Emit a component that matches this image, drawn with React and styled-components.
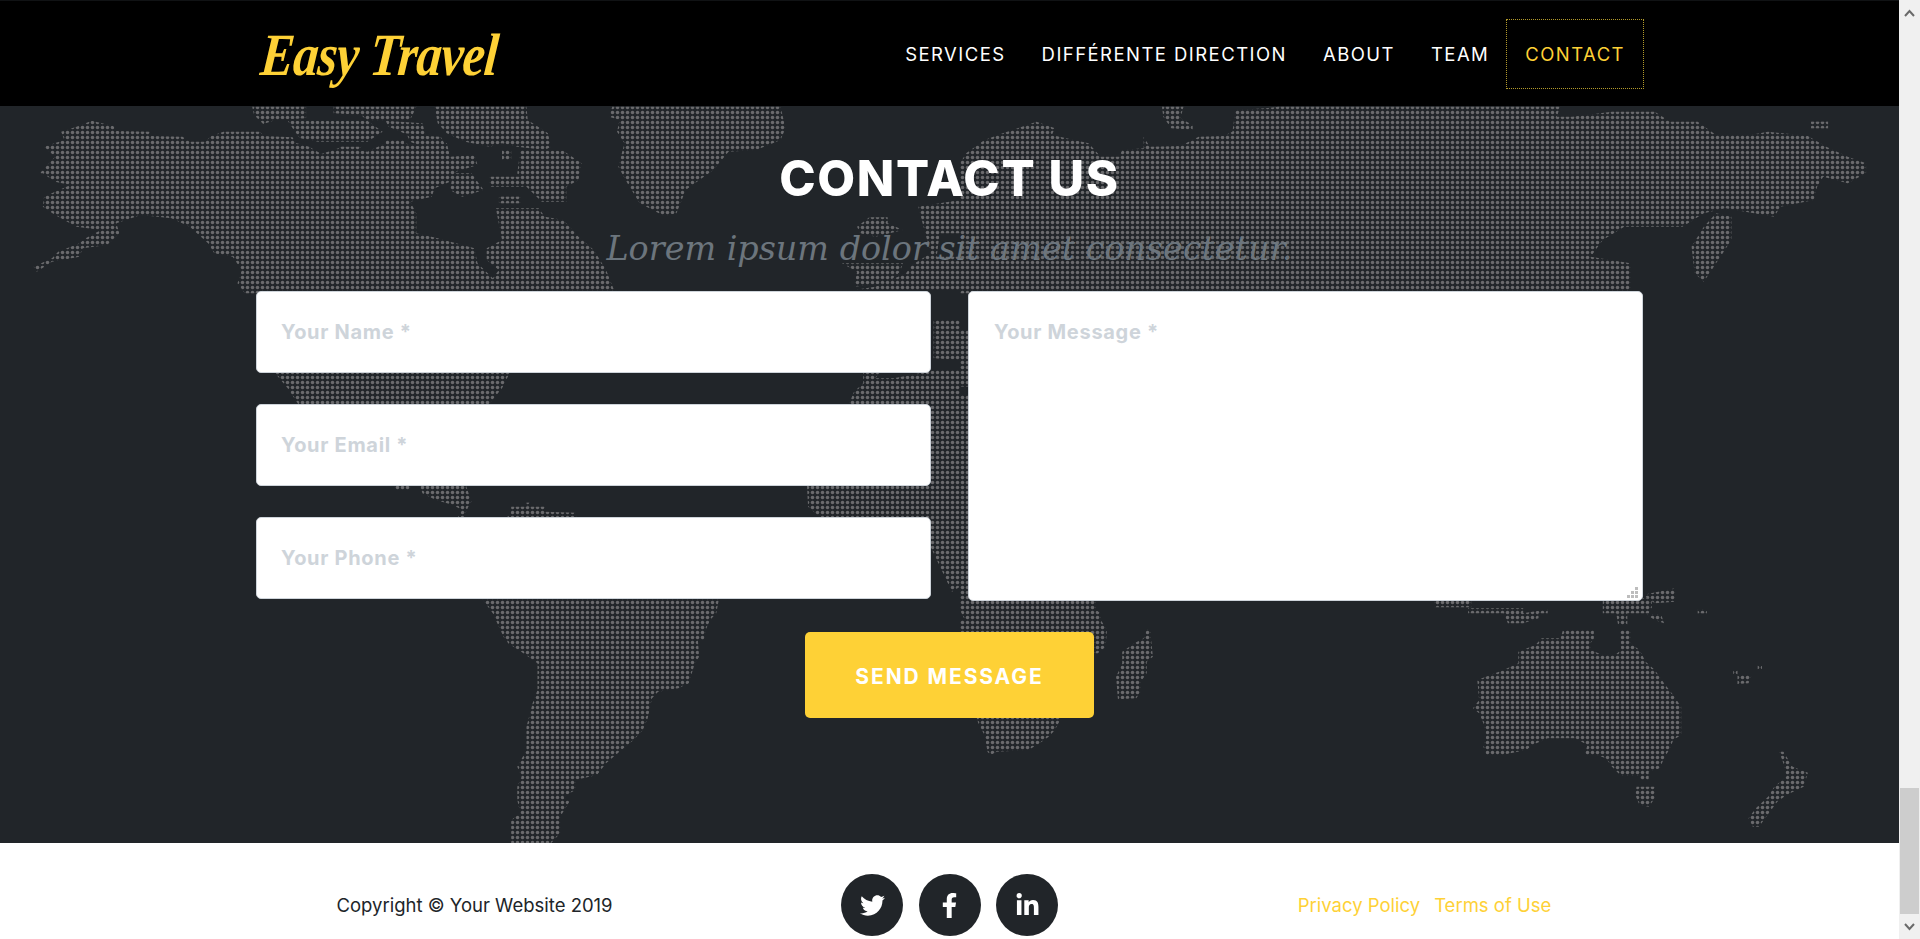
import React from 'react';
import styled, { createGlobalStyle } from 'styled-components';
import { FaTwitter, FaFacebookF, FaLinkedinIn } from 'react-icons/fa';

const GlobalStyle = createGlobalStyle`
  html, body {
    margin: 0;
    padding: 0;
    height: 100%;
    overflow: hidden;
    background: #fff;
  }
  * { box-sizing: border-box; }
`;

const navItems = ['Services', 'Différente Direction', 'About', 'Team', 'Contact'];

// continents traced per view: ox/oy is the corner of the traced tile, points are stretched
const mapTiles = [
  { ox: 0, oy: 0, shapes: [
    '65,520 75,500 90,470 72,440 105,420 100,395 125,380 150,362 185,378 190,393 245,395 245,408 298,410 310,425 335,425 345,408 365,395 425,395 430,408 478,412 482,428 505,440 525,462 560,440 600,455 630,430 660,430 690,440 700,425 730,430 735,470 775,465 780,495 745,515 735,545 710,565 705,590 670,605 680,640 680,700 715,715 775,745 780,790 805,835 815,810 795,780 795,745 820,720 810,625 880,625 890,650 920,660 945,710 970,750 990,810 1005,880 400,880 388,850 395,810 380,770 350,760 340,730 310,680 280,655 230,645 190,670 195,700 175,735 135,745 130,770 85,785 60,815 55,800 85,775 95,755 130,730 140,715 165,690 125,680 110,665 90,645 70,620 72,590 90,575 115,555 90,545 70,520',
    '412,320 500,320 500,355 450,360 430,372 415,345',
    '545,320 680,320 670,360 600,362 590,345 545,340',
    '470,362 600,362 625,395 600,425 520,425 490,415 480,390',
    '710,320 860,320 862,360 895,400 900,440 890,450 845,440 820,430 800,440 760,425 730,400 715,370',
    '630,362 690,370 695,405 660,400 635,380',
    '665,405 720,410 730,445 695,445 670,425',
    '630,420 660,420 660,435 630,435',
    '555,440 590,440 585,460 555,460',
    '820,450 835,450 835,480 820,480',
    '850,450 920,452 950,490 945,540 925,560 925,605 885,605 860,560 845,520',
    '800,530 860,530 855,560 800,560',
    '815,590 850,590 850,610 815,610',
    '740,520 770,520 790,570 755,590 735,570',
    '1000,320 1275,320 1283,385 1275,420 1235,450 1190,455 1165,510 1120,570 1105,640 1085,648 1045,610 1025,550 1010,500 1020,430 1008,395 1012,360 995,350',
    '1420,652 1450,652 1450,670 1475,690 1430,710 1405,700 1400,680',
    '1500,620 1568,600 1568,700 1535,700 1530,770 1568,770 1568,870 1395,870 1430,860 1480,820 1490,795 1520,760 1510,690',
    '1375,790 1475,790 1470,815 1450,850 1395,860 1400,815',
  ] },
  { ox: 960, oy: 0, shapes: [
    '0,490 10,460 40,420 70,400 125,365 155,385 150,405 210,430 230,470 260,470 265,450 300,445 300,410 310,440 360,438 390,410 430,408 445,395 450,330 500,325 520,320 980,320 975,350 1000,350 1065,335 1135,335 1160,365 1205,365 1235,405 1290,405 1320,395 1385,408 1415,440 1450,470 1480,490 1480,520 1450,550 1410,530 1400,560 1395,600 1340,620 1330,650 1250,625 1215,640 1180,680 1085,680 1050,720 1030,770 1095,790 1095,880 0,880',
    '330,320 365,320 360,355 380,375 380,390 345,385 332,350',
    '1235,640 1260,650 1260,720 1235,790 1215,845 1200,820 1195,740 1215,680',
    '1390,365 1418,365 1418,385 1390,385',
  ] },
  { ox: 0, oy: 320, shapes: [
    '445,150 835,150 820,205 795,260 490,260 470,205',
    '1410,150 1440,150 1430,175 1460,175 1530,150 1568,150 1568,260 1385,260 1395,215 1410,190',
    '1525,0 1568,0 1568,120 1525,115',
    '1520,250 1568,250 1568,800 1555,815 1520,680',
    '645,490 670,490 670,510 645,510',
    '685,490 760,490 770,545 765,560 755,600 745,600 755,570 740,555 712,540 690,520',
    '860,548 866,548 866,560 860,560',
    '835,560 890,560 890,575 940,578 942,600 825,600 835,575',
    '1318,490 1568,490 1568,600 1345,600 1320,560',
    '785,830 1175,830 1170,880 1155,910 1150,960 825,960 815,920 805,880',
  ] },
  { ox: 960, oy: 320, shapes: [
    '0,30 14,30 14,200 0,200',
    '0,225 14,225 14,850 0,850',
    '0,835 222,835 222,870 230,880 230,930 238,930 238,960 12,960 8,900 0,870',
    '305,928 312,928 312,960 305,960',
    '775,835 835,835 835,862 775,862',
    '830,865 920,865 920,880 960,868 960,880 945,880 945,895 920,910 895,910 888,880 830,880',
    '1050,835 1130,835 1130,862 1125,880 1050,880',
    '1115,825 1168,805 1168,845 1135,850',
    '1072,880 1090,880 1090,915 1075,915',
    '1120,882 1145,882 1150,910 1135,900',
    '1205,868 1220,868 1220,880 1205,880',
    '985,930 1035,930 1035,960 980,960',
    '1080,930 1095,930 1095,960 1080,960',
  ] },
  { ox: 0, oy: 620, shapes: [
    '810,0 1160,0 1150,40 1140,60 1142,110 1135,130 1125,190 1108,205 1075,215 1065,235 1058,295 1050,330 1035,360 1015,390 990,430 975,465 940,480 940,510 920,530 930,545 915,590 915,640 900,670 835,670 835,600 850,580 845,540 845,500 852,470 845,440 860,390 860,320 870,250 878,210 878,130 855,100 830,70 820,30',
    '993,395 1008,395 1008,405 993,405',
  ] },
  { ox: 960, oy: 620, shapes: [
    '0,0 230,0 240,30 238,80 225,100 165,100 165,295 155,330 145,350 130,370 112,390 60,395 50,405 45,395 40,345 30,310 25,280 0,280',
    '305,30 312,30 312,55 315,110 305,125 305,160 295,185 295,215 288,235 258,238 255,170 265,130 265,95 285,70 300,55',
    '985,30 1035,30 1035,55 1030,70 1030,90 1050,105 1070,105 1080,90 1078,30 1095,30 1095,70 1110,90 1120,125 1135,150 1150,190 1165,225 1178,260 1178,345 1165,360 1160,385 1150,415 1143,445 1125,455 1125,480 1112,480 1110,468 1080,468 1065,440 1055,415 1040,405 1020,405 1025,375 1005,355 960,355 935,375 925,390 885,405 860,405 855,380 860,345 855,310 848,280 838,265 848,240 845,180 888,150 912,130 912,95 940,75 950,55 985,55',
    '1105,500 1135,500 1135,535 1125,560 1110,555 1103,525',
    '1338,395 1345,395 1360,440 1385,458 1378,500 1350,525 1335,545 1325,570 1305,620 1295,620 1288,595 1300,565 1320,530 1330,500 1350,470 1345,430',
    '1263,150 1270,150 1270,165 1263,165',
    '1303,135 1310,135 1310,148 1303,148',
    '1270,165 1293,165 1288,190 1270,192',
  ] },
];

const WorldMap = () => (
  <MapSvg viewBox="0 106 1899 737" preserveAspectRatio="none" aria-hidden="true">
    <defs>
      <pattern id="dots" x="0" y="0" width="5" height="5" patternUnits="userSpaceOnUse">
        <circle cx="2.5" cy="2.5" r="1.75" fill="#6a6b6d" />
      </pattern>
      <filter id="soften" x="0" y="0" width="1" height="1">
        <feGaussianBlur stdDeviation="0.55" />
      </filter>
      <clipPath id="land">
        {mapTiles.map((tile) =>
          tile.shapes.map((pts, i) => (
            <polygon
              key={`${tile.ox}-${tile.oy}-${i}`}
              points={pts}
              transform={`translate(${tile.ox} ${tile.oy}) scale(0.6122 0.3333)`}
            />
          ))
        )}
      </clipPath>
    </defs>
    <g filter="url(#soften)">
      <rect x="0" y="106" width="1899" height="737" fill="url(#dots)" clipPath="url(#land)" />
    </g>
  </MapSvg>
);

const App = () => (
  <Viewport>
    <GlobalStyle />
    <Page>
      <Navbar>
        <NavInner>
          <Logo>Easy Travel</Logo>
          <NavList>
            {navItems.map((item) => (
              <NavLink key={item} href="#" $active={item === 'Contact'}>{item}</NavLink>
            ))}
          </NavList>
        </NavInner>
      </Navbar>

      <ContactSection>
        <WorldMap />
        <ContactInner>
          <Heading>CONTACT US</Heading>
          <SubHeading>Lorem ipsum dolor sit amet consectetur.</SubHeading>
          <FormGrid>
            <FieldColumn>
              <TextField type="text" placeholder="Your Name *" />
              <TextField type="email" placeholder="Your Email *" />
              <TextField type="tel" placeholder="Your Phone *" />
            </FieldColumn>
            <MessageWrap>
              <MessageField placeholder="Your Message *" />
              <ResizeGrip viewBox="0 0 12 12" aria-hidden="true">
                <rect x="8" y="0" width="3" height="3" />
                <rect x="4" y="4" width="3" height="3" />
                <rect x="8" y="4" width="3" height="3" />
                <rect x="0" y="8" width="3" height="3" />
                <rect x="4" y="8" width="3" height="3" />
                <rect x="8" y="8" width="3" height="3" />
              </ResizeGrip>
            </MessageWrap>
          </FormGrid>
          <SendButton type="button">SEND MESSAGE</SendButton>
        </ContactInner>
      </ContactSection>

      <Footer>
        <FooterInner>
          <Copyright>Copyright © Your Website 2019</Copyright>
          <SocialList>
            <SocialLink href="#"><FaTwitter /></SocialLink>
            <SocialLink href="#"><FaFacebookF /></SocialLink>
            <SocialLink href="#"><FaLinkedinIn /></SocialLink>
          </SocialList>
          <FooterLinks>
            <FooterLink href="#">Privacy Policy</FooterLink>
            <FooterLink href="#">Terms of Use</FooterLink>
          </FooterLinks>
        </FooterInner>
      </Footer>
    </Page>

    <Scrollbar>
      <ScrollArrow>
        <svg width="11" height="8" viewBox="0 0 11 8"><path d="M1 7 L5.5 2 L10 7" fill="none" stroke="#6a6a6a" strokeWidth="2" /></svg>
      </ScrollArrow>
      <ScrollSpacer />
      <ScrollThumb />
      <ScrollArrow>
        <svg width="11" height="8" viewBox="0 0 11 8"><path d="M1 1 L5.5 6 L10 1" fill="none" stroke="#6a6a6a" strokeWidth="2" /></svg>
      </ScrollArrow>
    </Scrollbar>
  </Viewport>
);

export default App;

const Viewport = styled.div`
  display: flex;
  width: 100%;
  height: 939px;
  overflow: hidden;
`;

const Page = styled.div`
  flex: 1;
  min-width: 0;
  display: flex;
  flex-direction: column;
  font-family: Inter, "Noto Sans", sans-serif;
`;

const Navbar = styled.header`
  height: 106px;
  flex-shrink: 0;
  background: #000;
  border-top: 1px solid #101214;
`;

const NavInner = styled.div`
  width: 1425px;
  height: 100%;
  margin: 0 auto;
  padding: 0 19px 0 24px;
  display: flex;
  align-items: center;
  justify-content: space-between;
`;

const Logo = styled.a`
  margin-top: 3px;
  font-family: "Liberation Serif", serif;
  font-style: italic;
  font-weight: 700;
  font-size: 60px;
  letter-spacing: -1px;
  color: #fed136;
  white-space: nowrap;
  transform: scaleX(0.84) skewX(-6deg);
  transform-origin: left center;
`;

const NavList = styled.nav`
  display: flex;
  align-items: center;
`;

const NavLink = styled.a`
  display: flex;
  align-items: center;
  height: 68px;
  padding: 0 18px;
  font-size: 18.5px;
  letter-spacing: 1.45px;
  text-transform: uppercase;
  text-decoration: none;
  white-space: nowrap;
  color: ${(p) => (p.$active ? '#fed136' : '#fff')};
  outline: ${(p) => (p.$active ? '1px dotted #b39a2a' : 'none')};
`;

const ContactSection = styled.section`
  position: relative;
  height: 737px;
  flex-shrink: 0;
  background: #212529;
  overflow: hidden;
`;

const MapSvg = styled.svg`
  position: absolute;
  inset: 0;
  width: 100%;
  height: 100%;
`;

const ContactInner = styled.div`
  position: relative;
  width: 1425px;
  margin: 0 auto;
  padding: 44px 19px 0;
  display: flex;
  flex-direction: column;
  align-items: center;
`;

const Heading = styled.h2`
  margin: 0;
  font-size: 49px;
  line-height: 58px;
  font-weight: 800;
  letter-spacing: 1.6px;
  color: #fff;
`;

const SubHeading = styled.h3`
  margin: 19px 0 0;
  font-family: "DejaVu Serif", "Liberation Serif", serif;
  font-style: italic;
  font-weight: 400;
  font-size: 33.4px;
  line-height: 44px;
  color: #6c757d;
  white-space: nowrap;
`;

const FormGrid = styled.form`
  width: 100%;
  margin-top: 20px;
  display: grid;
  grid-template-columns: 1fr 1fr;
  column-gap: 37px;
`;

const FieldColumn = styled.div`
  display: flex;
  flex-direction: column;
  gap: 31px;
`;

const fieldText = `
  width: 100%;
  padding: 0 24px;
  background: #fff;
  border: 1px solid #ced4da;
  border-radius: 5px;
  font-family: Inter, "Noto Sans", sans-serif;
  font-size: 20px;
  font-weight: 700;
  letter-spacing: 0.7px;
  color: #495057;
  outline: none;
  &::placeholder { color: #ced4da; opacity: 1; }
`;

const TextField = styled.input`
  ${fieldText}
  height: 82px;
`;

const MessageWrap = styled.div`
  position: relative;
  height: 310px;
`;

const MessageField = styled.textarea`
  ${fieldText}
  display: block;
  height: 100%;
  padding-top: 28px;
  padding-left: 25px;
  line-height: 24px;
  resize: none;
`;

const ResizeGrip = styled.svg`
  position: absolute;
  right: 4px;
  bottom: 2px;
  width: 12px;
  height: 12px;
  fill: #bdbdbd;
`;

const SendButton = styled.button`
  width: 289px;
  height: 86px;
  margin-top: 31px;
  padding-top: 3px;
  border: none;
  border-radius: 5px;
  background: #fed136;
  color: #fff;
  font-family: Inter, "Noto Sans", sans-serif;
  font-size: 21px;
  font-weight: 700;
  letter-spacing: 1.9px;
`;

const Footer = styled.footer`
  flex: 1;
  background: #fff;
  padding-top: 31px;
`;

const FooterInner = styled.div`
  width: 1425px;
  margin: 0 auto;
  display: grid;
  grid-template-columns: repeat(3, 1fr);
  align-items: center;
  justify-items: center;
`;

const Copyright = styled.span`
  font-size: 18.5px;
  color: #212529;
  white-space: nowrap;
`;

const SocialList = styled.div`
  display: flex;
  gap: 15.5px;
`;

const SocialLink = styled.a`
  width: 62px;
  height: 62px;
  border-radius: 50%;
  background: #212529;
  color: #fff;
  font-size: 25px;
  display: flex;
  align-items: center;
  justify-content: center;
`;

const FooterLinks = styled.div`
  display: flex;
  gap: 14px;
`;

const FooterLink = styled.a`
  font-size: 18.5px;
  color: #fed136;
  text-decoration: none;
  white-space: nowrap;
`;

const Scrollbar = styled.div`
  width: 21px;
  flex-shrink: 0;
  display: flex;
  flex-direction: column;
  background: #f0f0f0;
`;

const ScrollArrow = styled.div`
  height: 25px;
  flex-shrink: 0;
  display: flex;
  align-items: center;
  justify-content: center;
`;

const ScrollSpacer = styled.div`
  flex: 1;
`;

const ScrollThumb = styled.div`
  height: 126px;
  margin: 0 1px;
  background: #cdcdcd;
`;
